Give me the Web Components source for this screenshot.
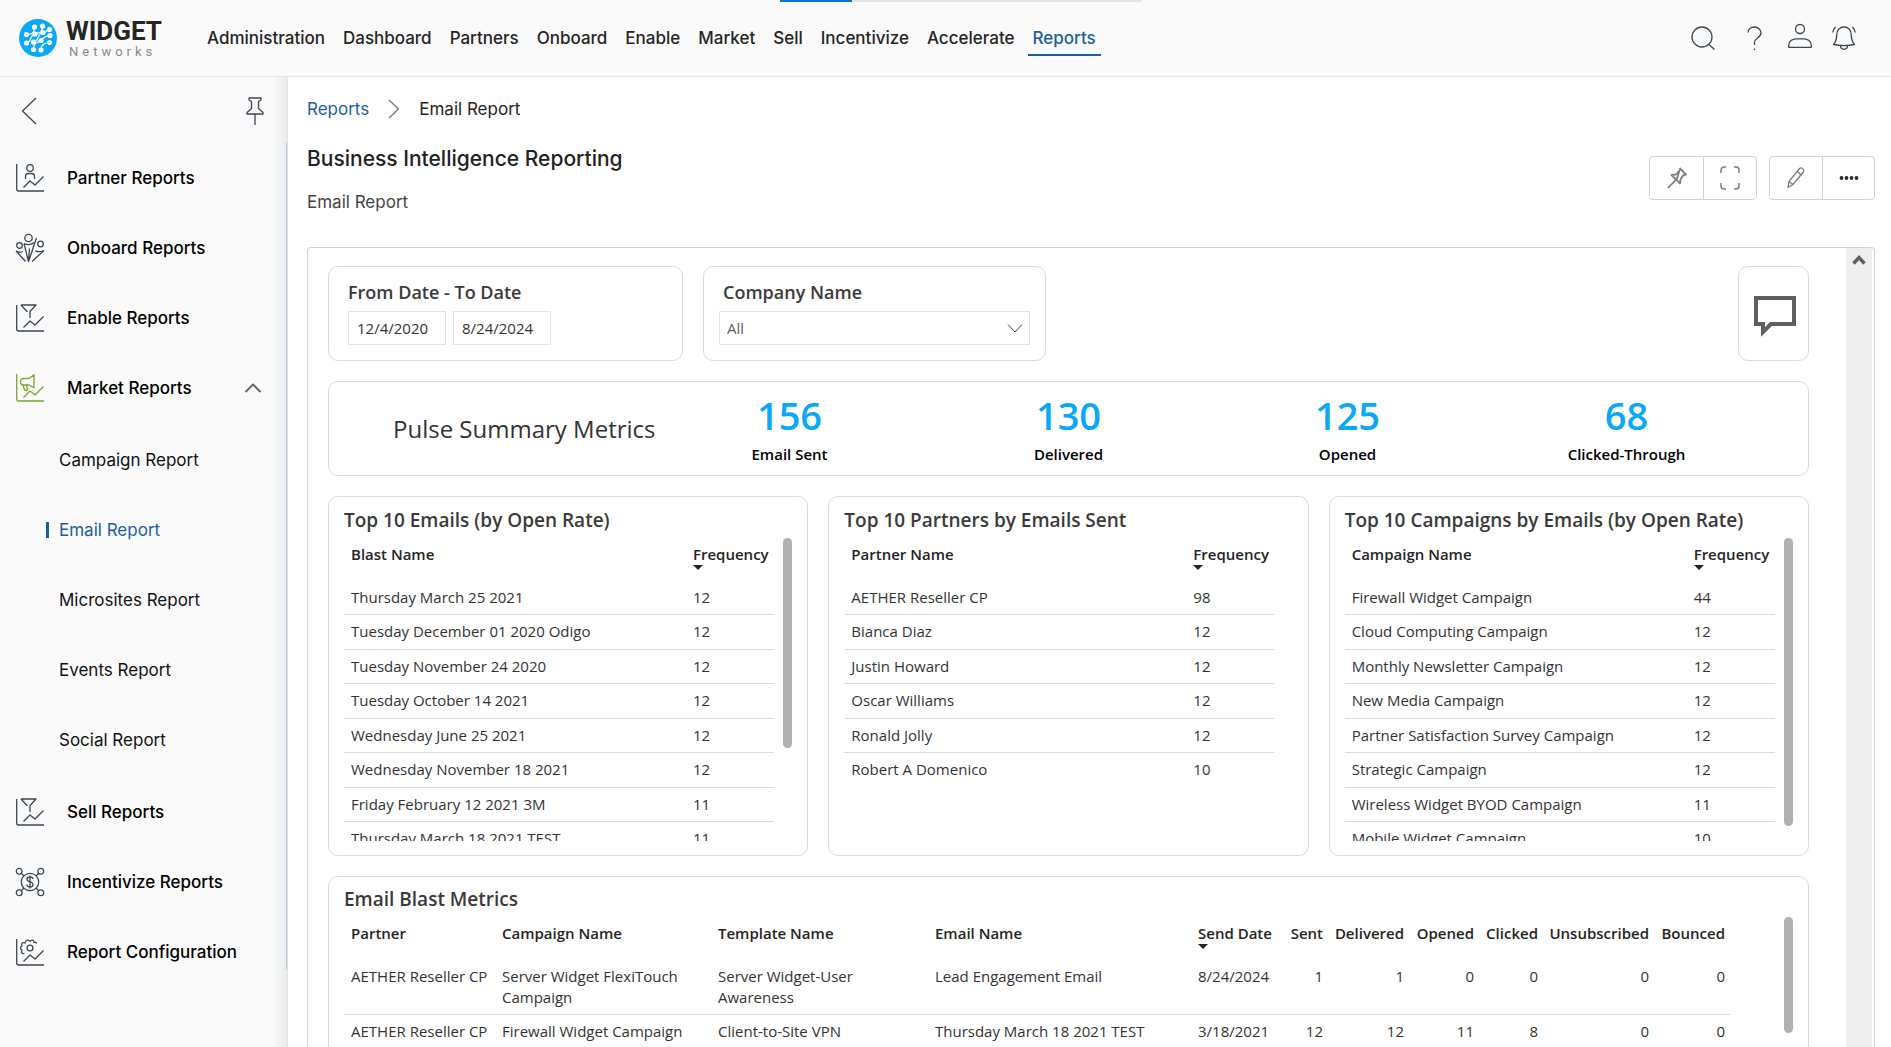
<!DOCTYPE html>
<html lang="en">
<head>
<meta charset="utf-8">
<title>Email Report</title>
<style>
  html, body { height: 100%; }
  body {
    margin: 0;
    background: #fff;
    color: #252423;
    font-family: Inter, "Liberation Sans", sans-serif;
    font-size: 17px;
    line-height: 24px;
    --blue: #1b5f9f;
    --line: #dcdcdc;
    --report-font: "Open Sans", "Noto Sans", sans-serif;
  }
</style>
</head>
<body>
<wn-app>
  <wn-topbar slot="top"></wn-topbar>
  <wn-sidebar slot="side"></wn-sidebar>
  <wn-page-head></wn-page-head>
  <wn-report>
    <wn-filters></wn-filters>
    <wn-card class="pulse"><wn-pulse></wn-pulse></wn-card>
    <div slot="ranks">
      <wn-card><wn-rank data="emails"></wn-rank></wn-card>
      <wn-card><wn-rank data="partners"></wn-rank></wn-card>
      <wn-card><wn-rank data="campaigns"></wn-rank></wn-card>
    </div>
    <wn-card slot="blast"><wn-blast></wn-blast></wn-card>
  </wn-report>
</wn-app>

<script>
(function(){
  const icons = {
    search: [24, 24, '<circle cx="11" cy="11" r="10"/><path d="M18 18.500l5.500 5"/>'],
    help: [16, 24, '<path d="M1 6.500C1 3 4 1 7.500 1S14 3.500 14 7c0 5-6.500 5-6.500 9.500v2.500"/><path d="M7.500 22.500v1.500"/>'],
    user: [24, 24, '<circle cx="12" cy="3" r="4.500"/><path d="M.7 21.300v-2c0-4 3.500-6.500 7.300-6.500h8c3.800 0 7.300 2.500 7.300 6.500v2z"/>'],
    bell: [24, 24, '<path d="M1.500 18.500c3-3 3-6 3.300-10C5 4 8 1 12 1s7 3 7.200 7.500c.3 4 .3 7 3.300 10-6 1.300-15 1.300-21 0z"/><path d="M8.500 19.500c0 5 7 5 7 0M3.500 1C2 2.500 1 4 .8 6.500M20.500 1c1.500 1.500 2.500 3 2.700 5.500"/>'],
    back: [16, 28, '<path d="M15 1L1.500 14 15 27"/>'],
    crumb: [12, 20, '<path d="M1 1l9.500 9L1 19"/>'],
    pin: [18, 28, '<path d="M3 1h12v2l-2.500 1.500v7l4.500 4v1.500H1v-1.500l4.500-4v-7L3 3zM9 17v11"/>'],
    up: [18, 12, '<path stroke-width="2" d="M1.500 10L9 2.500l7.500 7.500"/>'],
    down: [16, 10, '<path stroke-width="1" d="M1 1.500l7 7.500 7-7.500"/>'],
    partner: [28, 28, '<path d="M.7 0v25a2 2 0 0 0 2 2H28"/><circle cx="14" cy="4" r="3.300"/><path d="M9.500 15v-2.500a3 3 0 0 1 3-3h3a3 3 0 0 1 3 3V15M7.500 23.500l6.500-6.500 5 4L27.500 12.500"/>'],
    funnel: [28, 28, '<path d="M.7 1v24a2 2 0 0 0 2 2H28M5 1h15l-6 6.500V14M5 1l6 6.500v.5M7.500 23.500l6.500-6.500 5 4L27.500 12.500"/>'],
    market: [28, 28, '<path d="M.7 0v25a2 2 0 0 0 2 2H28M18 .7v13l-5-2.700H7.500a3 3 0 0 1-3-3V7.500a3 3 0 0 1 3-3H13zM7 11l1.500 5h3l-1-5M7.500 23.500l6.500-6.500 5 4L27.500 12.500"/>'],
    onboard: [28, 28, '<circle cx="12.500" cy="4" r="3.700"/><circle cx="3.500" cy="11.500" r="2.800"/><circle cx="24.500" cy="10" r="2.800"/><path d="M8 9.500l4.500 18L20.500 4M8 9.500c3 1.500 7 1.500 10-1M0 17l9.500 10.500M0 17c2 1.200 5 1.200 7 .5M28 16.500l-12 11M19.500 17c3 .8 6 .8 8.500-.5M12.500 27.500l1-13"/>'],
    network: [28, 28, '<circle cx="14" cy="14" r="8.700"/><circle cx="3.200" cy="3.200" r="2.900"/><circle cx="24.800" cy="3.200" r="2.900"/><circle cx="3.200" cy="24.800" r="2.900"/><circle cx="24.800" cy="24.800" r="2.900"/><path d="M5.500 5.500L8 8M22.500 5.500L20 8M5.500 22.500L8 20M22.500 22.500L20 20M17 11c0-1.500-1.300-2-3-2s-3 .8-3 2.300c0 3.500 6 1.900 6 5.200 0 1.700-1.300 2.500-3 2.500s-3-.8-3-2.500M14 7.500v13"/>'],
    config: [28, 28, '<path d="M.7 1v24a2 2 0 0 0 2 2H28M7.500 23.500l6.500-6.500 5 4L27.500 12.500M8.500 15.500c-3 .3-3.500-1-2.500-3.500-2-1-2-3 0-4-1-3 .5-4 3-3 .7-3 3.500-4 5-1.500C15.500 1 18 2 18 4.500c1.500-.5 2.500 0 2.500 1"/><circle cx="14" cy="10" r="2.900"/>'],
    tack: [20, 24, '<path stroke-width="1.800" d="M12.500 2l6.500 6.500-2.500.5-3 4.500-.5 4-3.800-4L1 22M9.500 14L4.500 9l4.300-.5 3.700-4z"/>'],
    full: [20, 24, '<path stroke-width="1.500" d="M1 7V4a3 3 0 0 1 3-3h2M14 1h2a3 3 0 0 1 3 3v3M19 17v3a3 3 0 0 1-3 3h-2M6 23H4a3 3 0 0 1-3-3v-3"/>'],
    pencil: [18, 22, '<path d="M1 20.500l1-6L12.500 1.500c1-1 2-.8 3 0l.5.500c1 1 1 2 .3 3L6 17.500zM10.500 4.500l4 4M2 14.500l4 3"/>'],
    dots: [20, 6, '<g fill="currentColor" stroke="none"><circle cx="2.500" cy="3" r="1.900"/><circle cx="7.500" cy="3" r="1.900"/><circle cx="12.500" cy="3" r="1.900"/><circle cx="17.500" cy="3" r="1.900"/></g>'],
    comment: [42, 40, '<path stroke-width="4" stroke-linejoin="miter" d="M2 2h38v26H17l-8 8v-8H2z"/>'],
    caret: [14, 12, '<path stroke-width="3.500" stroke-linejoin="miter" d="M1.500 10.500L7 4.500l5.500 6"/>']
  };

  const ranks = {
    emails: {
      title: 'Top 10 Emails (by Open Rate)', head: 'Blast Name', thumb: 70,
      rows: [['Thursday March 25 2021', 12], ['Tuesday December 01 2020 Odigo', 12], ['Tuesday November 24 2020', 12],
        ['Tuesday October 14 2021', 12], ['Wednesday June 25 2021', 12], ['Wednesday November 18 2021', 12],
        ['Friday February 12 2021 3M', 11], ['Thursday March 18 2021 TEST', 11]]
    },
    partners: {
      title: 'Top 10 Partners by Emails Sent', head: 'Partner Name', thumb: 0,
      rows: [['AETHER Reseller CP', 98], ['Bianca Diaz', 12], ['Justin Howard', 12], ['Oscar Williams', 12],
        ['Ronald Jolly', 12], ['Robert A Domenico', 10]]
    },
    campaigns: {
      title: 'Top 10 Campaigns by Emails (by Open Rate)', head: 'Campaign Name', thumb: 96,
      rows: [['Firewall Widget Campaign', 44], ['Cloud Computing Campaign', 12], ['Monthly Newsletter Campaign', 12],
        ['New Media Campaign', 12], ['Partner Satisfaction Survey Campaign', 12], ['Strategic Campaign', 12],
        ['Wireless Widget BYOD Campaign', 11], ['Mobile Widget Campaign', 10]]
    }
  };

  const tableStyle = `
    h2 { margin: 0 0 4px; font-size: 19px; line-height: 28px; font-weight: 600; color: #3a3a3a; white-space: nowrap; }
    table { border-collapse: collapse; table-layout: fixed; width: 100%; font-size: 15px; line-height: 21px; }
    th { font-weight: 600; text-align: left; vertical-align: top; height: 37px; padding: 6px 0 0 7px; color: #252423; white-space: nowrap; }
    td { color: #333; vertical-align: top; padding: 6px 0 6px 7px; border-bottom: 1px solid var(--line); }
    .sort::after {
      content: ''; display: block; width: 0; height: 0;
      border: 5px solid transparent; border-top-color: #252423; border-bottom: 0;
    }
    .thumb { flex: none; width: 9px; border-radius: 5px; background: #b0b0b0; }
  `;

  // Registers an element whose shadow root is filled from a template.
  function define(name, html) {
    const template = document.createElement('template');
    customElements.define(name, class extends HTMLElement {
      constructor() {
        super();
        template.innerHTML = typeof html === 'function' ? html(this) : html;
        this.attachShadow({mode: 'open'}).appendChild(template.content.cloneNode(true));
      }
    });
  }

  define('wn-icon', el => {
    const [w, h, body] = icons[el.getAttribute('name')];
    return `
      <style>
        :host { display: inline-flex; }
        svg { display: block; fill: none; stroke: currentColor; stroke-width: 1.300; stroke-linejoin: round; overflow: visible; }
      </style>
      <svg width="${w}" height="${h}" viewBox="0 0 ${w} ${h}" aria-hidden="true">${body}</svg>`;
  });

  define('wn-app', `
    <style>
      :host { display: grid; grid-template: auto minmax(0, 1fr) / 288px minmax(0, 1fr); height: 100vh; overflow: hidden; }
      slot[name=top] { display: block; grid-column: 1 / -1; }
      slot[name=side] { display: block; }
      main { display: flex; flex-direction: column; min-height: 0; padding: 20px 16px 0 19px; }
    </style>
    <slot name="top"></slot>
    <slot name="side"></slot>
    <main><slot></slot></main>
  `);

  define('wn-logo', `
    <style>
      :host { display: block; }
      a { display: flex; align-items: center; gap: 9px; text-decoration: none; }
      .name { display: grid; font-family: Roboto, sans-serif; padding-top: 2px; }
      b { font-size: 26px; line-height: 25px; font-weight: 700; color: #252525; }
      small { font-size: 13px; line-height: 15px; color: #888; letter-spacing: 4px; padding-left: 3px; }
    </style>
    <a href="#">
      <svg width="38" height="38" viewBox="0 0 38 38" aria-hidden="true">
        <circle cx="19" cy="19" r="19" fill="#0aa8f8"/>
        <g fill="none" stroke="#fff" stroke-width="1.200">
          <path d="M7.500 15.500c5 0 8-1 8-7.500M7.500 24c5 0 3-8 8.500-9s7.500-2 7.500-8M14.500 23c6 0 3-9 9.500-9.500 4 0 4-3 6.500-3M14.500 30.500c0-8 4-6 7.500-9s3-5 9-5M22 31c0-6 4-7 8.500-7.500"/>
        </g>
        <g fill="#fff">
          <circle cx="15.500" cy="8" r="2.600"/><circle cx="23.500" cy="7" r="2.600"/><circle cx="7.500" cy="15.500" r="2.600"/>
          <circle cx="16" cy="15" r="2.600"/><circle cx="24" cy="13.500" r="2.600"/><circle cx="30.500" cy="10.500" r="2.600"/>
          <circle cx="7.500" cy="24" r="2.600"/><circle cx="14.500" cy="23" r="2.600"/><circle cx="22" cy="21.500" r="2.600"/>
          <circle cx="31" cy="16.500" r="2.600"/><circle cx="14.500" cy="30.500" r="2.600"/><circle cx="22" cy="31" r="2.600"/>
          <circle cx="30.500" cy="23.500" r="2.600"/>
        </g>
      </svg>
      <span class="name"><b>WIDGET</b><small>Networks</small></span>
    </a>
  `);

  define('wn-topbar', `
    <style>
      :host { display: flex; align-items: center; height: 76px; background: #fafafa; border-bottom: 1px solid #e1e5ea; padding: 0 35px 0 19px; position: relative; }
      nav { display: flex; gap: 8px; margin: 0 auto 0 40px; }
      nav a { color: #252525; text-decoration: none; font-weight: 500; padding: 6px 5px 4px; border-bottom: 2px solid transparent; }
      nav a.on { color: var(--blue); border-color: var(--blue); }
      .tools { display: flex; align-items: center; gap: 20px; }
      button { border: 0; padding: 0; background: none; color: #3b4754; display: flex; }
      .wide { margin-right: 12px; }
      .help { margin-right: 5px; }
      .progress { position: absolute; top: 0; left: calc(50% - 166px); width: 362px; height: 2px; background: #e4e4e4; }
      .progress i { display: block; width: 20%; height: 2px; background: #0078d4; }
    </style>
    <div class="progress" role="progressbar" aria-label="Loading"><i></i></div>
    <wn-logo></wn-logo>
    <nav>
      <a href="#">Administration</a><a href="#">Dashboard</a><a href="#">Partners</a><a href="#">Onboard</a><a href="#">Enable</a><a href="#">Market</a><a href="#">Sell</a><a href="#">Incentivize</a><a href="#">Accelerate</a><a href="#" class="on">Reports</a>
    </nav>
    <div class="tools">
      <button aria-label="Search" class="wide"><wn-icon name="search"></wn-icon></button>
      <button aria-label="Help" class="help"><wn-icon name="help"></wn-icon></button>
      <button aria-label="Account"><wn-icon name="user"></wn-icon></button>
      <button aria-label="Notifications"><wn-icon name="bell"></wn-icon></button>
    </div>
  `);

  define('wn-side-item', el => `
    <style>
      :host { display: block; }
      a { display: flex; align-items: center; height: 70px; padding: 0 24px 0 16px; color: #000; font-weight: 500; text-decoration: none; }
      .icon { width: 51px; display: flex; color: #3b4754; }
      .green { color: #76a832; }
      .open { margin-left: auto; color: #666; display: flex; }
    </style>
    <a href="#">
      <span class="icon ${el.hasAttribute('open') ? 'green' : ''}"><wn-icon name="${el.getAttribute('icon')}"></wn-icon></span>
      <slot></slot>
      ${el.hasAttribute('open') ? '<span class="open"><wn-icon name="up"></wn-icon></span>' : ''}
    </a>
  `);

  define('wn-sidebar', `
    <style>
      :host {
        display: block; height: 100%; box-sizing: border-box;
        background: linear-gradient(to left, #e9ebed, #fafafa 14px);
        border-right: 1px solid #dfe4e8;
      }
      .top { display: flex; justify-content: space-between; align-items: center; height: 66px; box-sizing: border-box; padding: 2px 23px 0 21px; }
      button { border: 0; padding: 0; background: none; color: #3b4754; display: flex; }
      .list { border-right: 1px solid #b9c4cc; height: 826px; }
      .sub { margin: 2px 0; }
      .sub a { display: flex; align-items: center; height: 70px; padding-left: 59px; color: #111; text-decoration: none; }
      .sub a.on { color: var(--blue); padding-left: 46px; gap: 10px; }
      .sub a.on::before { content: ''; width: 3px; height: 16px; background: var(--blue); }
    </style>
    <div class="top">
      <button aria-label="Back"><wn-icon name="back"></wn-icon></button>
      <button aria-label="Pin menu"><wn-icon name="pin"></wn-icon></button>
    </div>
    <nav class="list">
      <wn-side-item icon="partner">Partner Reports</wn-side-item>
      <wn-side-item icon="onboard">Onboard Reports</wn-side-item>
      <wn-side-item icon="funnel">Enable Reports</wn-side-item>
      <wn-side-item icon="market" open>Market Reports</wn-side-item>
      <div class="sub">
        <a href="#">Campaign Report</a>
        <a href="#" class="on">Email Report</a>
        <a href="#">Microsites Report</a>
        <a href="#">Events Report</a>
        <a href="#">Social Report</a>
      </div>
      <wn-side-item icon="funnel">Sell Reports</wn-side-item>
      <wn-side-item icon="network">Incentivize Reports</wn-side-item>
      <wn-side-item icon="config">Report Configuration</wn-side-item>
    </nav>
  `);

  define('wn-page-head', `
    <style>
      :host { display: block; }
      .crumbs { display: flex; align-items: center; gap: 19px; }
      .crumbs a { color: var(--blue); text-decoration: none; }
      .crumbs wn-icon { color: #777; }
      .row { display: flex; justify-content: space-between; align-items: center; margin: 24px 0 33px; }
      h1 { margin: 0 0 17px; font-size: 21px; line-height: 28px; font-weight: 500; color: #222; }
      p { margin: 0; color: #444; }
      .tools, .group { display: flex; }
      .tools { gap: 12px; margin-bottom: 4px; }
      .group { border: 1px solid #ccd3da; border-radius: 4px; }
      button { width: 52px; height: 42px; padding: 0; border: 0; background: none; color: #7d7d7d; display: flex; align-items: center; justify-content: center; }
      .view button { width: 53px; }
      button + button { border-left: 1px solid #ccd3da; }
      .dark { color: #252b33; }
    </style>
    <div class="crumbs"><a href="#">Reports</a><wn-icon name="crumb"></wn-icon><span>Email Report</span></div>
    <div class="row">
      <div>
        <h1>Business Intelligence Reporting</h1>
        <p>Email Report</p>
      </div>
      <div class="tools">
        <div class="group view">
          <button aria-label="Pin report"><wn-icon name="tack"></wn-icon></button>
          <button aria-label="Full screen"><wn-icon name="full"></wn-icon></button>
        </div>
        <div class="group">
          <button aria-label="Edit"><wn-icon name="pencil"></wn-icon></button>
          <button aria-label="More" class="dark"><wn-icon name="dots"></wn-icon></button>
        </div>
      </div>
    </div>
  `);

  define('wn-report', `
    <style>
      :host {
        flex: 1; min-height: 0; display: flex; overflow: hidden; font-family: var(--report-font);
        border: 1px solid #cbd5db; border-bottom: 0; border-radius: 4px 4px 0 0; padding-right: 2px;
      }
      .body { flex: 1; min-width: 0; display: flex; flex-direction: column; gap: 20px; padding: 18px 37px 0 20px; }
      .body > * { flex: none; }
      ::slotted(div) { display: grid; grid-template-columns: repeat(3, minmax(0, 1fr)); gap: 20px; }
      .track { width: 26px; background: #efefef; color: #606060; display: flex; justify-content: center; padding-top: 5px; }
    </style>
    <div class="body">
      <slot></slot>
      <slot name="ranks"></slot>
      <slot name="blast"></slot>
    </div>
    <div class="track"><wn-icon name="caret"></wn-icon></div>
  `);

  define('wn-card', `
    <style>
      :host { display: block; box-sizing: border-box; border: 1px solid var(--line); border-radius: 10px; background: #fff; }
    </style>
    <slot></slot>
  `);

  define('wn-filters', `
    <style>
      :host { display: flex; gap: 20px; }
      wn-card { height: 95px; padding: 11px 19px; }
      .dates { flex: 0 1 355px; }
      .company { flex: 0 1 343px; padding: 11px 15px; }
      .comment { margin-left: auto; width: 71px; padding: 0; }
      label, .label { display: block; font-size: 18px; line-height: 28px; font-weight: 600; color: #3a3a3a; margin-bottom: 5px; }
      .company label { margin-left: 4px; }
      .pair { display: flex; gap: 7px; }
      input, select { box-sizing: border-box; height: 34px; border: 1px solid #e4e4e4; background: #fff; font: 15px/20px var(--report-font); color: #333; padding: 0 8px; margin: 0; border-radius: 0; }
      input { width: 98px; }
      .select { display: grid; align-items: center; }
      select { appearance: none; width: 100%; grid-area: 1 / 1; padding: 0 7px; color: #605e5c; }
      .select wn-icon { grid-area: 1 / 1; justify-self: end; margin-right: 7px; pointer-events: none; color: #444; }
      button { width: 100%; height: 100%; border: 0; padding: 5px 0 0 3px; background: none; color: #5f5f5f; display: flex; align-items: center; justify-content: center; }
    </style>
    <wn-card class="dates">
      <span class="label" id="range">From Date - To Date</span>
      <div class="pair" role="group" aria-labelledby="range">
        <input type="text" value="12/4/2020" aria-label="From date">
        <input type="text" value="8/24/2024" aria-label="To date">
      </div>
    </wn-card>
    <wn-card class="company">
      <label for="company">Company Name</label>
      <div class="select">
        <select id="company"><option>All</option></select>
        <wn-icon name="down"></wn-icon>
      </div>
    </wn-card>
    <wn-card class="comment"><button aria-label="Comments"><wn-icon name="comment"></wn-icon></button></wn-card>
  `);

  define('wn-pulse', `
    <style>
      :host { display: flex; align-items: center; height: 93px; padding-right: 42px; }
      h2 { margin: 0; width: 257px; padding-left: 64px; font-size: 24px; line-height: 32px; font-weight: 400; color: #333; white-space: nowrap; }
      dl { flex: 1; margin: 0 0 2px; display: grid; grid-template-columns: repeat(4, 1fr); text-align: center; }
      div { display: flex; flex-direction: column-reverse; }
      dt { font-size: 15px; line-height: 20px; font-weight: 600; color: #000; }
      dd { margin: 0 0 6px; font-size: 38px; line-height: 46px; font-weight: 600; color: #0aa8f8; }
    </style>
    <h2>Pulse Summary Metrics</h2>
    <dl>
      <div><dt>Email Sent</dt><dd>156</dd></div>
      <div><dt>Delivered</dt><dd>130</dd></div>
      <div><dt>Opened</dt><dd>125</dd></div>
      <div><dt>Clicked-Through</dt><dd>68</dd></div>
    </dl>
  `);

  define('wn-rank', el => {
    const data = ranks[el.getAttribute('data')];
    return `
    <style>
      ${tableStyle}
      :host { display: block; height: 358px; box-sizing: border-box; padding: 9px 15px 14px; }
      .view { display: flex; justify-content: space-between; gap: 8px; }
      .clip { flex: 0 1 430px; height: 303px; overflow: hidden; }
      th:last-child { width: 81px; }
      tr:nth-child(even) td { padding-bottom: 7px; }
      ${data.thumb ? '' : 'tr:last-child td { border: 0; }'}
    </style>
    <h2>${data.title}</h2>
    <div class="view">
      <div class="clip">
        <table>
          <thead><tr><th>${data.head}</th><th class="sort">Frequency</th></tr></thead>
          <tbody>${data.rows.map(r => `<tr><td>${r[0]}</td><td>${r[1]}</td></tr>`).join('')}</tbody>
        </table>
      </div>
      ${data.thumb ? `<div class="thumb" style="height: ${data.thumb * 3}px"></div>` : ''}
    </div>`;
  });

  define('wn-blast', `
    <style>
      ${tableStyle}
      :host { display: block; padding: 8px 15px; }
      .view { display: flex; justify-content: space-between; }
      .grid { flex: 0 1 1386px; }
      .thumb { height: 116px; }
      th.n, td.n { text-align: right; padding-right: 5px; padding-left: 0; }
    </style>
    <h2>Email Blast Metrics</h2>
    <div class="view">
      <div class="grid">
        <table>
          <colgroup>
            <col style="width: 151px"><col style="width: 216px"><col style="width: 217px"><col style="width: 263px">
            <col style="width: 88px"><col style="width: 49px"><col style="width: 81px"><col style="width: 70px">
            <col style="width: 64px"><col style="width: 111px"><col style="width: 76px">
          </colgroup>
          <thead>
            <tr><th>Partner</th><th>Campaign Name</th><th>Template Name</th><th>Email Name</th><th class="sort">Send Date</th><th class="n">Sent</th><th class="n">Delivered</th><th class="n">Opened</th><th class="n">Clicked</th><th class="n">Unsubscribed</th><th class="n">Bounced</th></tr>
          </thead>
          <tbody>
            <tr><td>AETHER Reseller CP</td><td>Server Widget FlexiTouch Campaign</td><td>Server Widget-User Awareness</td><td>Lead Engagement Email</td><td>8/24/2024</td><td class="n">1</td><td class="n">1</td><td class="n">0</td><td class="n">0</td><td class="n">0</td><td class="n">0</td></tr>
            <tr><td>AETHER Reseller CP</td><td>Firewall Widget Campaign</td><td>Client-to-Site VPN</td><td>Thursday March 18 2021 TEST</td><td>3/18/2021</td><td class="n">12</td><td class="n">12</td><td class="n">11</td><td class="n">8</td><td class="n">0</td><td class="n">0</td></tr>
          </tbody>
        </table>
      </div>
      <div class="thumb"></div>
    </div>
  `);
})();
</script>
</body>
</html>
